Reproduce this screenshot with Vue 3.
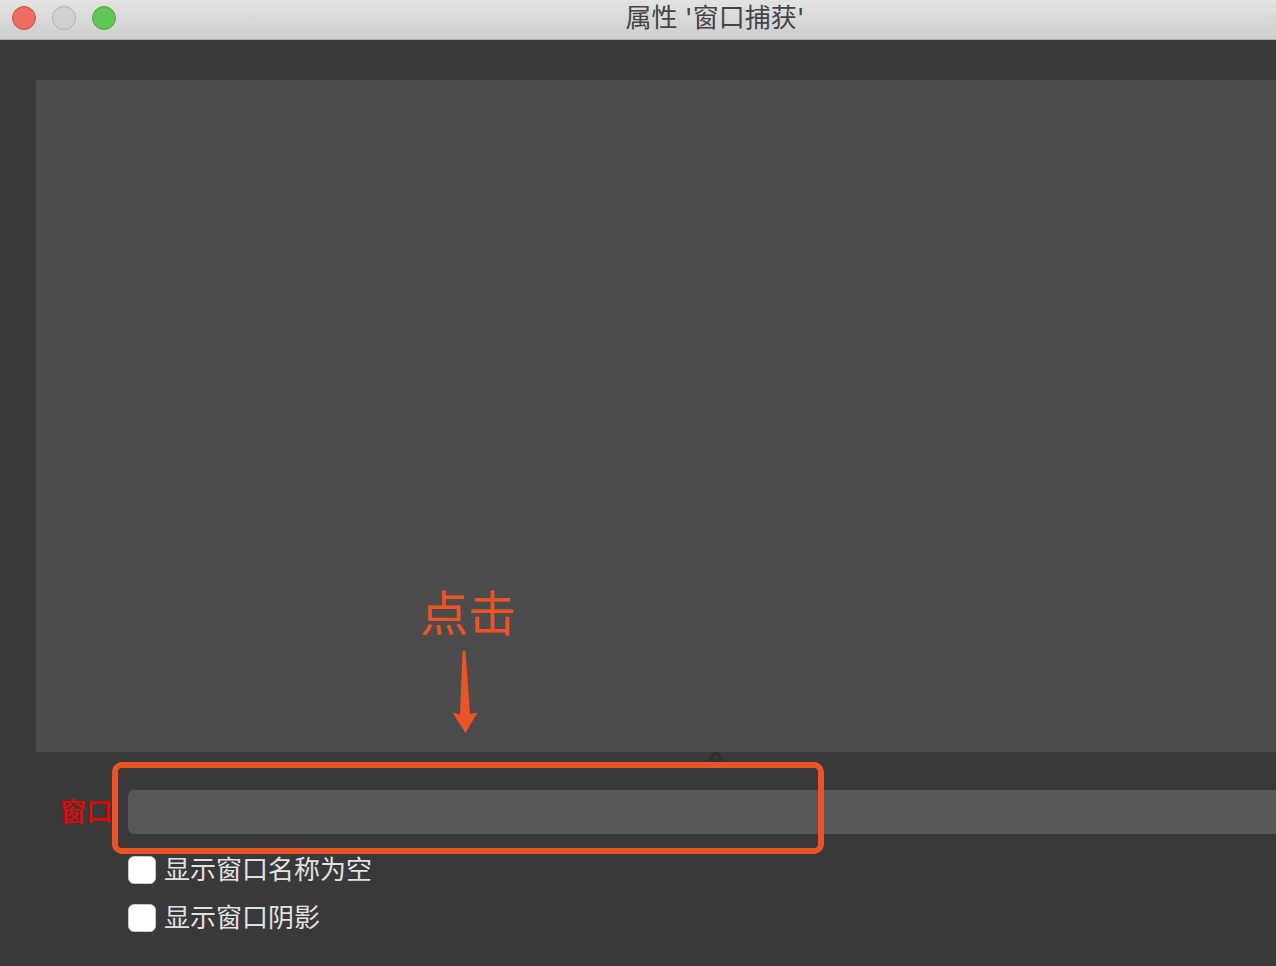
<script setup>
import { ref } from 'vue'

const selectedWindow = ref('')
const options = ref([
  { id: 'show-empty', label: '显示窗口名称为空', checked: false },
  { id: 'show-shadow', label: '显示窗口阴影', checked: false },
])
</script>

<template>
  <main class="dialog">
    <header class="titlebar">
      <div class="controls">
        <button class="light close" type="button" aria-label="关闭"></button>
        <button class="light minimize" type="button" aria-label="最小化" disabled></button>
        <button class="light expand" type="button" aria-label="缩放"></button>
      </div>
      <h1 class="title">属性 '窗口捕获'</h1>
    </header>

    <section class="preview">
      <div class="hint">
        <span class="hint-text">点击</span>
        <svg class="hint-arrow" width="32" height="84" viewBox="0 0 32 84" aria-hidden="true">
          <path d="M10.5 1.5Q12 0 13.5 1.5L18 64L25.500 62.500L13.500 83L0.500 62.500L8 64.500Z" fill="#ee5326" />
        </svg>
      </div>
    </section>

    <div class="splitter"><span class="grip"></span></div>

    <form class="form" @submit.prevent>
      <label class="field-label" for="window-select">窗口</label>
      <div class="field">
        <select id="window-select" v-model="selectedWindow" class="select">
          <option value=""></option>
        </select>
        <div class="highlight"></div>
      </div>
      <div class="options">
        <label v-for="option in options" :key="option.id" class="option" :for="option.id">
          <input :id="option.id" v-model="option.checked" class="checkbox" type="checkbox" />
          <span>{{ option.label }}</span>
        </label>
      </div>
    </form>
  </main>
</template>

<style>
body {
  background: #393939;
}
</style>

<style scoped>
.dialog {
  display: flex;
  flex-direction: column;
  box-sizing: border-box;
  min-height: 100vh;
  background: #393939;
  color: #e2e2e2;
  font-family: Inter, "Noto Sans CJK SC", sans-serif;
  font-size: 26px;
  line-height: 28px;
}

.titlebar {
  display: flex;
  align-items: center;
  box-sizing: border-box;
  height: 40px;
  padding: 0 0 4px 12px;
  border-bottom: 1px solid #b0b0b0;
  background: linear-gradient(#e3e3e3, #cecece);
}

.controls {
  display: flex;
  gap: 16px;
  width: 142px;
}

.light {
  box-sizing: border-box;
  width: 24px;
  height: 24px;
  padding: 0;
  border: 1px solid;
  border-radius: 50%;
}

.close {
  border-color: #c4534c;
  background: #ee6b60;
}

.minimize {
  border-color: #aeaeae;
  background: #d1d1d1;
}

.expand {
  border-color: #4ca942;
  background: #60c655;
}

.title {
  flex: 1;
  margin: 0;
  color: #454545;
  font-size: 26px;
  font-weight: 400;
  text-align: center;
}

.preview {
  position: relative;
  flex: 1;
  min-height: 200px;
  margin: 40px 0 0 36px;
  background: #4c4c4c;
}

.hint {
  position: absolute;
  bottom: 18px;
  left: 384px;
  display: flex;
  flex-direction: column;
  align-items: center;
  gap: 8px;
  color: #ee5326;
}

.hint-text {
  font-size: 48px;
  line-height: 56px;
}

.hint-arrow {
  display: block;
}

.splitter {
  display: flex;
  justify-content: center;
  height: 38px;
  padding-left: 156px;
}

.grip {
  box-sizing: border-box;
  width: 12px;
  height: 12px;
  border: 3px solid #2e2e2e;
  border-radius: 50%;
  background: #363636;
}

.form {
  display: grid;
  grid-template-columns: 112px 1fr;
  gap: 22px 16px;
  padding-bottom: 34px;
}

.field-label {
  align-self: center;
  color: #f00000;
  font-weight: 500;
  text-align: right;
}

.field {
  position: relative;
}

.select {
  display: block;
  appearance: none;
  width: 100%;
  height: 44px;
  padding: 0 12px;
  border: 0;
  border-radius: 6px 0 0 6px;
  background: #575757;
  color: inherit;
  font: inherit;
}

.highlight {
  position: absolute;
  top: -28px;
  left: -16px;
  box-sizing: border-box;
  width: 712px;
  height: 92px;
  border: 6px solid #ee5326;
  border-radius: 10px;
  pointer-events: none;
}

.options {
  display: flex;
  flex-direction: column;
  grid-column: 2;
  align-items: flex-start;
  gap: 20px;
}

.option {
  display: flex;
  align-items: center;
  gap: 8px;
}

.checkbox {
  appearance: none;
  box-sizing: border-box;
  width: 28px;
  height: 28px;
  margin: 0;
  border: 1px solid #c8c8c8;
  border-radius: 6px;
  background: #fff;
}

.checkbox:checked {
  background: #3b82f6;
}
</style>
